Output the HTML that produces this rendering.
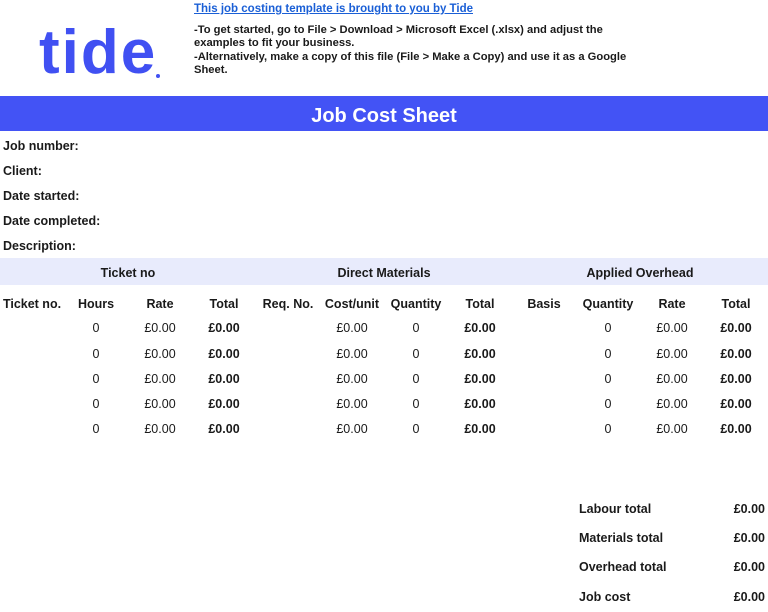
<!DOCTYPE html>
<html><head><meta charset="utf-8"><style>
*{margin:0;padding:0;box-sizing:border-box}
body{width:768px;height:612px;background:#fff;font-family:"Liberation Sans",Arial,sans-serif;font-weight:bold;color:#1a1a1a;position:relative;overflow:hidden;font-size:12.5px}
.a{position:absolute;white-space:nowrap}
.logo{left:39px;top:17px;font-size:62px;color:#4050f2;letter-spacing:2px;font-weight:bold}
.dot{position:absolute;left:156px;top:74px;width:4px;height:4px;border-radius:50%;background:#4050f2}
.link{left:194px;top:3px;font-size:11.5px;color:#1a5fd6;text-decoration:underline}
.info{left:194px;top:24px;font-size:11.2px;line-height:13.3px;white-space:normal;width:460px}
.band{left:0;top:96px;width:768px;height:35px;background:#4353f5;color:#fff;font-size:20px;text-align:center;line-height:40px}
.lab{left:3px}
.sec{left:0;top:258px;width:768px;height:27px;background:#e8ebfc}
.c{position:absolute;width:64px;text-align:center}
.n{font-weight:normal}
</style></head><body>
<div class="a logo">tide</div><div class="dot"></div>
<div class="a link">This job costing template is brought to you by Tide</div>
<div class="a info">-To get started, go to File &gt; Download &gt; Microsoft Excel (.xlsx) and adjust the examples to fit your business.<br>-Alternatively, make a copy of this file (File &gt; Make a Copy) and use it as a Google Sheet.</div>
<div class="a band">Job Cost Sheet</div>
<div class="a lab" style="top:139px">Job number:</div>
<div class="a lab" style="top:164px">Client:</div>
<div class="a lab" style="top:189px">Date started:</div>
<div class="a lab" style="top:214px">Date completed:</div>
<div class="a lab" style="top:239px">Description:</div>
<div class="a sec"></div>
<div class="a" style="top:266px;left:0;width:256px;text-align:center">Ticket no</div>
<div class="a" style="top:266px;left:256px;width:256px;text-align:center">Direct Materials</div>
<div class="a" style="top:266px;left:512px;width:256px;text-align:center">Applied Overhead</div>
<div id="t"></div>
<script>
var h=["Ticket no.","Hours","Rate","Total","Req. No.","Cost/unit","Quantity","Total","Basis","Quantity","Rate","Total"];
var o="";
h.forEach(function(s,i){o+='<div class="c" style="left:'+(i*64)+'px;top:297px">'+s+'</div>';});
[321,347,372,397,422].forEach(function(y){
 var r=[["",1],["0",1],["£0.00",1],["£0.00",0],["",1],["£0.00",1],["0",1],["£0.00",0],["",1],["0",1],["£0.00",1],["£0.00",0]];
 r.forEach(function(v,i){o+='<div class="c'+(v[1]?' n':'')+'" style="left:'+(i*64)+'px;top:'+y+'px">'+v[0]+'</div>';});
});
document.getElementById("t").innerHTML=o;
</script>
<div class="a" style="left:579px;top:502px">Labour total</div><div class="a" style="right:3px;top:502px">£0.00</div>
<div class="a" style="left:579px;top:531px">Materials total</div><div class="a" style="right:3px;top:531px">£0.00</div>
<div class="a" style="left:579px;top:560px">Overhead total</div><div class="a" style="right:3px;top:560px">£0.00</div>
<div class="a" style="left:579px;top:590px">Job cost</div><div class="a" style="right:3px;top:590px">£0.00</div>
</body></html>
